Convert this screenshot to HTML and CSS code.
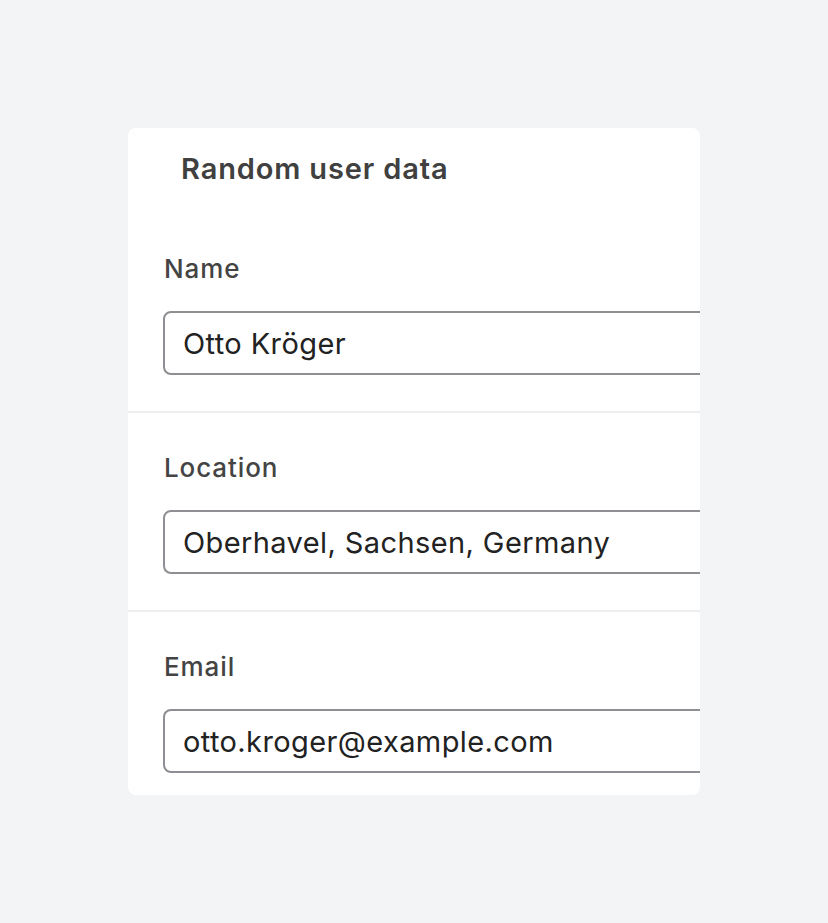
FILE: index.html
```html
<!DOCTYPE html>
<html lang="en">

<head>
    <meta charset="UTF-8">
    <meta name="viewport" content="width=device-width, initial-scale=1.0">
    <title>Random user data</title>
    <link rel="stylesheet" href="styles.css">
</head>

<body>

    <div class="card">
        <h2 class="card-title">Random user data</h2>

        <div class="field">
            <label for="name">Name</label>
            <input type="text" id="name" value="Otto Kröger" readonly>
        </div>

        <div class="field">
            <label for="location">Location</label>
            <input type="text" id="location" value="Oberhavel, Sachsen, Germany" readonly>
        </div>

        <div class="field last">
            <label for="email">Email</label>
            <input type="text" id="email" value="otto.kroger@example.com" readonly>
        </div>
    </div>

</body>

</html>
```

FILE: styles.css
```css
/* Page */
body {
    margin: 0;
    padding: 128px 0 0 128px;
    background-color: #f3f4f6;
    font-family: 'Inter', 'Noto Sans', sans-serif;
    color: #3f3f46;
}

/* Card */
.card {
    width: 572px;
    background-color: #ffffff;
    border-radius: 8px;
    overflow: hidden;
}

.card-title {
    margin: 0;
    padding: 23px 0 27px 53px;
    font-size: 29px;
    line-height: 36px;
    font-weight: 600;
    letter-spacing: 0.85px;
    color: #404040;
}

/* Fields */
.field {
    padding: 39px 0 36px 36px;
    border-bottom: 2px solid #eeeef0;
}

.field:first-of-type {
    padding-top: 39px;
}

.field.last {
    border-bottom: none;
    padding-bottom: 22px;
}

.field label {
    display: block;
    font-size: 26px;
    line-height: 32px;
    font-weight: 500;
    letter-spacing: 0.9px;
    color: #444444;
    margin-bottom: 26px;
}

.field input {
    display: block;
    box-sizing: border-box;
    width: 600px;
    height: 64px;
    margin-left: -1px;
    padding: 0 18px;
    font-family: inherit;
    font-size: 29px;
    letter-spacing: 0.4px;
    color: #222222;
    border: 2px solid #8e8e93;
    border-radius: 8px;
    background-color: #ffffff;
    outline: none;
}
```
